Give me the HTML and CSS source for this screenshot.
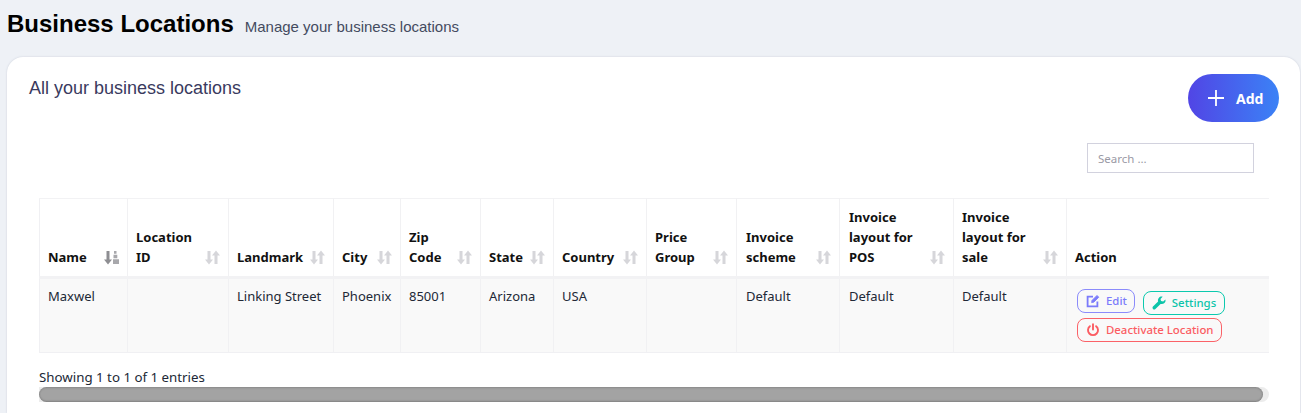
FILE: index.html
```html
<!DOCTYPE html>
<html lang="en">
<head>
    <meta charset="UTF-8">
    <meta name="viewport" content="width=device-width, initial-scale=1.0">
    <title>Business Locations</title>
    <link rel="stylesheet" href="styles.css">
</head>
<body>
    <div class="page-header">
        <h1>Business Locations</h1>
        <small>Manage your business locations</small>
    </div>
    <div class="card">
        <div class="card-top">
            <h3>All your business locations</h3>
            <button class="add-btn">
                <svg width="18" height="18" viewBox="0 0 18 18"><path d="M9 1v16M1 9h16" stroke="#fff" stroke-width="1.8" fill="none"/></svg>
                Add
            </button>
        </div>
        <div class="search-row">
            <input class="search" type="text" placeholder="Search ...">
        </div>
        <div class="table-wrap">
            <table>
                <colgroup>
                    <col class="c1"><col class="c2"><col class="c3"><col class="c4"><col class="c5"><col class="c6">
                    <col class="c7"><col class="c8"><col class="c9"><col class="c10"><col class="c11"><col class="c12">
                </colgroup>
                <thead>
                    <tr>
                        <th><div class="th-in"><span>Name</span><svg class="sort active" width="15" height="15" viewBox="0 0 15 15"><path d="M2.500 1h3v8.500H8l-4 5-4-5h2.500z"/><path class="stack" d="M10 1h2.500v2.800H10zM9.500 4.800h3.800v3.400H9.500zM9 9.200h6V14H9z"/></svg></div></th>
                        <th><div class="th-in"><span>Location<br>ID</span><svg class="sort" width="15" height="15" viewBox="0 0 15 15"><path d="M2.500 1h3v8.500H8l-4 5-4-5h2.500z"/><path d="M9.500 14h3V5.500H15l-4-5-4 5h2.500z"/></svg></div></th>
                        <th><div class="th-in"><span>Landmark</span><svg class="sort" width="15" height="15" viewBox="0 0 15 15"><path d="M2.500 1h3v8.500H8l-4 5-4-5h2.500z"/><path d="M9.500 14h3V5.500H15l-4-5-4 5h2.500z"/></svg></div></th>
                        <th><div class="th-in"><span>City</span><svg class="sort" width="15" height="15" viewBox="0 0 15 15"><path d="M2.500 1h3v8.500H8l-4 5-4-5h2.500z"/><path d="M9.500 14h3V5.500H15l-4-5-4 5h2.500z"/></svg></div></th>
                        <th><div class="th-in"><span>Zip<br>Code</span><svg class="sort" width="15" height="15" viewBox="0 0 15 15"><path d="M2.500 1h3v8.500H8l-4 5-4-5h2.500z"/><path d="M9.500 14h3V5.500H15l-4-5-4 5h2.500z"/></svg></div></th>
                        <th><div class="th-in"><span>State</span><svg class="sort" width="15" height="15" viewBox="0 0 15 15"><path d="M2.500 1h3v8.500H8l-4 5-4-5h2.500z"/><path d="M9.500 14h3V5.500H15l-4-5-4 5h2.500z"/></svg></div></th>
                        <th><div class="th-in"><span>Country</span><svg class="sort" width="15" height="15" viewBox="0 0 15 15"><path d="M2.500 1h3v8.500H8l-4 5-4-5h2.500z"/><path d="M9.500 14h3V5.500H15l-4-5-4 5h2.500z"/></svg></div></th>
                        <th><div class="th-in"><span>Price<br>Group</span><svg class="sort" width="15" height="15" viewBox="0 0 15 15"><path d="M2.500 1h3v8.500H8l-4 5-4-5h2.500z"/><path d="M9.500 14h3V5.500H15l-4-5-4 5h2.500z"/></svg></div></th>
                        <th><div class="th-in"><span>Invoice<br>scheme</span><svg class="sort" width="15" height="15" viewBox="0 0 15 15"><path d="M2.500 1h3v8.500H8l-4 5-4-5h2.500z"/><path d="M9.500 14h3V5.500H15l-4-5-4 5h2.500z"/></svg></div></th>
                        <th><div class="th-in"><span>Invoice<br>layout for<br>POS</span><svg class="sort" width="15" height="15" viewBox="0 0 15 15"><path d="M2.500 1h3v8.500H8l-4 5-4-5h2.500z"/><path d="M9.500 14h3V5.500H15l-4-5-4 5h2.500z"/></svg></div></th>
                        <th><div class="th-in"><span>Invoice<br>layout for<br>sale</span><svg class="sort" width="15" height="15" viewBox="0 0 15 15"><path d="M2.500 1h3v8.500H8l-4 5-4-5h2.500z"/><path d="M9.500 14h3V5.500H15l-4-5-4 5h2.500z"/></svg></div></th>
                        <th><div class="th-in"><span>Action</span></div></th>
                    </tr>
                </thead>
                <tbody>
                    <tr>
                        <td>Maxwel</td>
                        <td></td>
                        <td>Linking Street</td>
                        <td>Phoenix</td>
                        <td>85001</td>
                        <td>Arizona</td>
                        <td>USA</td>
                        <td></td>
                        <td>Default</td>
                        <td>Default</td>
                        <td>Default</td>
                        <td class="actions">
                            <a class="pill edit">
                                <svg width="14" height="14" viewBox="0 0 14 14" fill="none" stroke="currentColor" stroke-width="1.8"><path d="M7 2.600H1.600v9.800h9.800V7.400"/><path d="M5.600 8.600l.4-2.200L11 1.400l1.800 1.800-5 5z" fill="currentColor" stroke-width="0.8"/></svg>
                                Edit
                            </a>
                            <a class="pill settings">
                                <svg width="14" height="14" viewBox="0 0 14 14" fill="currentColor"><path d="M13.400 3.400c.4 1.500-.1 3-1.300 3.900-1 .8-2.300 1-3.500.6L3.400 13c-.7.7-1.800.7-2.400 0-.7-.7-.6-1.700 0-2.400L6.100 5.400C5.700 4.200 6 2.900 6.800 1.900 7.700.8 9.200.3 10.600.7L8.500 2.900l.5 2.200 2.200.5z"/></svg>
                                Settings
                            </a>
                            <a class="pill deactivate">
                                <svg width="14" height="14" viewBox="0 0 14 14" fill="none" stroke="currentColor" stroke-width="1.900" stroke-linecap="round"><path d="M7 1.200v5.400"/><path d="M3.900 3.200a5 5 0 1 0 6.200 0"/></svg>
                                Deactivate Location
                            </a>
                        </td>
                    </tr>
                </tbody>
            </table>
        </div>
        <div class="table-info">Showing 1 to 1 of 1 entries</div>
        <div class="scroll-track"><div class="scroll-thumb"></div></div>
    </div>
</body>
</html>
```

FILE: styles.css
```css
* {
    box-sizing: border-box;
}
html, body {
    height: 100%;
}
body {
    margin: 0;
    background: #eef1f6;
    font-family: "Noto Sans", sans-serif;
    overflow: hidden;
    color: #1f2a44;
}
.page-header {
    display: flex;
    align-items: baseline;
    height: 57px;
    padding: 8px 0 0 7px;
    font-family: "Liberation Sans", Arial, sans-serif;
}
.page-header h1 {
    margin: 0;
    font-size: 24px;
    line-height: 32px;
    font-weight: 700;
    color: #000;
}
.page-header small {
    margin-left: 11px;
    font-size: 15px;
    color: #444b5f;
}
.card {
    margin: 0 1px 0 7px;
    height: 356px;
    padding: 17px 22px 0;
    background: #fff;
    border-radius: 16px 16px 0 0;
    box-shadow: 0 0 2px rgba(90, 100, 130, 0.25);
}
.card-top {
    display: flex;
    justify-content: space-between;
    align-items: flex-start;
    height: 69px;
}
.card-top h3 {
    margin: 4px 0 0;
    font-family: "Liberation Sans", Arial, sans-serif;
    font-size: 18px;
    line-height: 20px;
    font-weight: 400;
    color: #3a3a5e;
}
.add-btn {
    display: flex;
    align-items: center;
    gap: 11px;
    width: 91px;
    height: 48px;
    margin-right: -1px;
    padding: 0 0 0 19px;
    border: 0;
    border-radius: 24px;
    background: linear-gradient(to right, #5145e5, #3b82f6);
    color: #fff;
    font-family: "Noto Sans", sans-serif;
    font-size: 14px;
    font-weight: 700;
}
.search-row {
    display: flex;
    justify-content: flex-end;
    height: 55px;
    padding-right: 24px;
}
.search {
    width: 167px;
    height: 30px;
    padding: 0 10px;
    border: 1px solid #d2d2de;
    background: #fff;
    font-family: "Noto Sans", sans-serif;
    font-size: 11.5px;
    outline: none;
}
.search::placeholder {
    color: #9a9aa5;
}
.table-wrap {
    margin-left: 10px;
    width: 1230px;
}
table {
    width: 1229px;
    table-layout: fixed;
    border-collapse: collapse;
    font-size: 13px;
    color: #212836;
}
.c1 { width: 88px; }
.c2 { width: 101px; }
.c3 { width: 105px; }
.c4 { width: 67px; }
.c5 { width: 80px; }
.c6 { width: 73px; }
.c7 { width: 93px; }
.c8 { width: 90px; }
.c9 { width: 103px; }
.c10 { width: 114px; }
.c11 { width: 113px; }
.c12 { width: 202px; }
th, td {
    border: 1px solid #f0f0f3;
    border-top-color: #f2f2f4;
    border-right-color: #f1f1f3;
}
tr > :last-child {
    border-right: 0;
}
th {
    height: 79px;
    padding: 0 8px 9px;
    vertical-align: bottom;
    text-align: left;
    font-weight: 700;
    line-height: 20px;
    color: #111;
    border-bottom: 3px solid #f2f2f4;
}
th:nth-child(9),
th:nth-child(10),
td:nth-child(9),
td:nth-child(10) {
    padding-left: 9px;
}
.th-in {
    display: flex;
    align-items: flex-end;
    justify-content: space-between;
}
.sort {
    flex: none;
    margin-bottom: 2px;
    fill: #d6d6da;
}
.sort.active {
    fill: #8e8e92;
}
.sort .stack {
    fill: #a8a8ac;
}
td {
    height: 75px;
    padding: 8px 8px 0;
    vertical-align: top;
    background: #f9f9f9;
    line-height: 18px;
}
.actions {
    padding: 10px 8px 0 10px;
    font-size: 0;
}
.pill {
    display: inline-flex;
    align-items: center;
    gap: 6px;
    height: 24px;
    padding: 0 8px;
    border: 1px solid;
    border-radius: 8px;
    font-size: 11.4px;
    font-weight: 500;
}
.pill.edit {
    color: #7b7bfb;
    border-color: #8b8bfb;
    margin-right: 8px;
    padding-right: 7px;
    vertical-align: top;
}
.pill.settings {
    color: #0cc4a9;
    border-color: #0cc9ae;
    margin-top: 2px;
    vertical-align: top;
}
.pill.deactivate {
    color: #fb5c62;
    border-color: #fb6268;
    margin-top: 3px;
}
.table-info {
    margin: 15px 0 0 10px;
    font-size: 13.3px;
    line-height: 19px;
    color: #212836;
}
.scroll-track {
    width: 1230px;
    height: 15px;
    margin-left: 10px;
    background: #ececec;
    border-radius: 0 8px 8px 0;
}
.scroll-thumb {
    width: 1224px;
    height: 15px;
    border-radius: 8px;
    background: #a3a3a3;
    box-shadow: inset 0 -1px 2px rgba(0, 0, 0, 0.2), inset 0 1px 2px rgba(0, 0, 0, 0.15);
}
```
